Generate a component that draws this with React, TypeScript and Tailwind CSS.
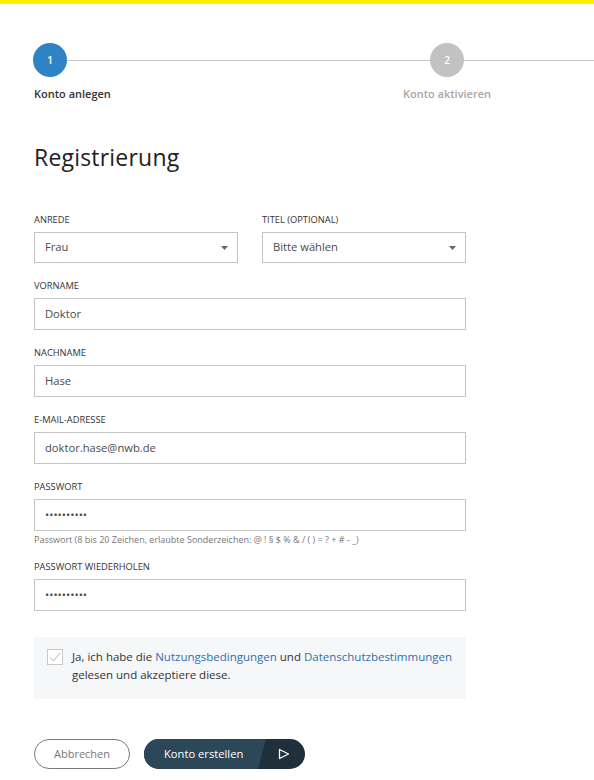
function Chevron() {
  return (
    <svg width="7" height="4" viewBox="0 0 7 4" className="shrink-0">
      <path d="M0 0h7L3.5 4z" fill="#666" />
    </svg>
  );
}

function Label({ children }: { children: React.ReactNode }) {
  return <div className="text-[9.3px] leading-[12px] text-[#333] mb-[6px] uppercase">{children}</div>;
}

function Field({ label, value, className = "" }: { label: string; value: string; className?: string }) {
  return (
    <div className={className}>
      <Label>{label}</Label>
      <div className="h-[32px] border border-[#c4c4c4] flex items-center px-[10px] text-[11.2px] text-[#4a4a4a]">{value}</div>
    </div>
  );
}

function Select({ label, value }: { label: string; value: string }) {
  return (
    <div className="flex-1">
      <Label>{label}</Label>
      <div className="h-[31px] border border-[#c4c4c4] flex items-center justify-between pl-[10px] pr-[9px] text-[11.2px] text-[#4a4a4a]">
        <span>{value}</span>
        <Chevron />
      </div>
    </div>
  );
}

export default function App() {
  return (
    <div className="w-[594px] h-[780px] overflow-hidden bg-white text-[#333]" style={{ fontFamily: '"Open Sans", "Liberation Sans", sans-serif' }}>
      <div className="h-[4px] bg-[#fff000]" />

      {/* stepper */}
      <div className="mt-[39px] pl-[33px]">
        <div className="flex items-center">
          <div className="w-[34px] h-[34px] rounded-full bg-[#2f83c5] text-white text-[10px] font-semibold flex items-center justify-center">1</div>
          <div className="w-[363px] h-px bg-[#c6c6c6]" />
          <div className="w-[34px] h-[34px] rounded-full bg-[#c2c2c2] text-white text-[10px] font-semibold flex items-center justify-center">2</div>
          <div className="flex-1 h-px bg-[#c6c6c6]" />
        </div>
        <div className="flex mt-[10px] text-[11px] leading-[14px] font-semibold">
          <div className="w-[364px] pl-px text-[#333]">Konto anlegen</div>
          <div className="w-[100px] text-center text-[#a8a8a8]">Konto aktivieren</div>
        </div>
      </div>

      <div className="px-[34px] w-[500px]">
        <h1 className="mt-[41px] text-[23px] leading-[30px] font-medium text-[#222] tracking-[0.2px]">Registrierung</h1>

        <div className="mt-[42px] flex gap-[24px]">
          <Select label="Anrede" value="Frau" />
          <Select label="Titel (optional)" value="Bitte wählen" />
        </div>

        <Field label="Vorname" value="Doktor" className="mt-[17px]" />
        <Field label="Nachname" value="Hase" className="mt-[17px]" />
        <Field label="E-Mail-Adresse" value="doktor.hase@nwb.de" className="mt-[17px]" />
        <Field label="Passwort" value="••••••••••" className="mt-[17px]" />
        <div className="mt-[3px] text-[9px] leading-[12px] text-[#777]">
          Passwort (8 bis 20 Zeichen, erlaubte Sonderzeichen: @ ! § $ % &amp; / ( ) = ? + # - _)
        </div>
        <Field label="Passwort wiederholen" value="••••••••••" className="mt-[15px]" />

        <div className="mt-[26px] bg-[#f5f7f9] h-[62px] pl-[13px] pr-[8px] pt-[12px] flex gap-[9px]">
          <div className="w-[16px] h-[16px] border border-[#c8c8c8] bg-white shrink-0 flex items-center justify-center">
            <svg width="12" height="10" viewBox="0 0 12 10">
              <path d="M1 5.5l3.5 3.5L11 1" fill="none" stroke="#b5b5b5" strokeWidth="1" />
            </svg>
          </div>
          <div className="text-[11.5px] leading-[18px] text-[#333] -mt-[1px] whitespace-nowrap">
            Ja, ich habe die <span className="text-[#2f6fae]">Nutzungsbedingungen</span> und{" "}
            <span className="text-[#2f6fae]">Datenschutzbestimmungen</span>
            <br />
            gelesen und akzeptiere diese.
          </div>
        </div>

        <div className="mt-[40px] flex items-center gap-[14px]">
          <button className="w-[96px] h-[30px] rounded-full border border-[#7a7a7a] text-[11px] text-[#777]">Abbrechen</button>
          <button className="w-[161px] h-[30px] rounded-full overflow-hidden flex text-[11.2px] text-white bg-[#1f303c]">
            <span className="h-full w-[122px] bg-[#2c4757] flex items-center pl-[20px] [clip-path:polygon(0_0,100%_0,calc(100%-8px)_100%,0_100%)]">
              Konto erstellen
            </span>
            <span className="flex-1 flex items-center justify-center pr-[4px]">
              <svg width="12" height="12" viewBox="0 0 12 12">
                <path d="M1.5 1.5L10.5 6L1.5 10.5z" fill="none" stroke="#fff" strokeWidth="1.3" strokeLinejoin="round" />
              </svg>
            </span>
          </button>
        </div>
      </div>
    </div>
  );
}
